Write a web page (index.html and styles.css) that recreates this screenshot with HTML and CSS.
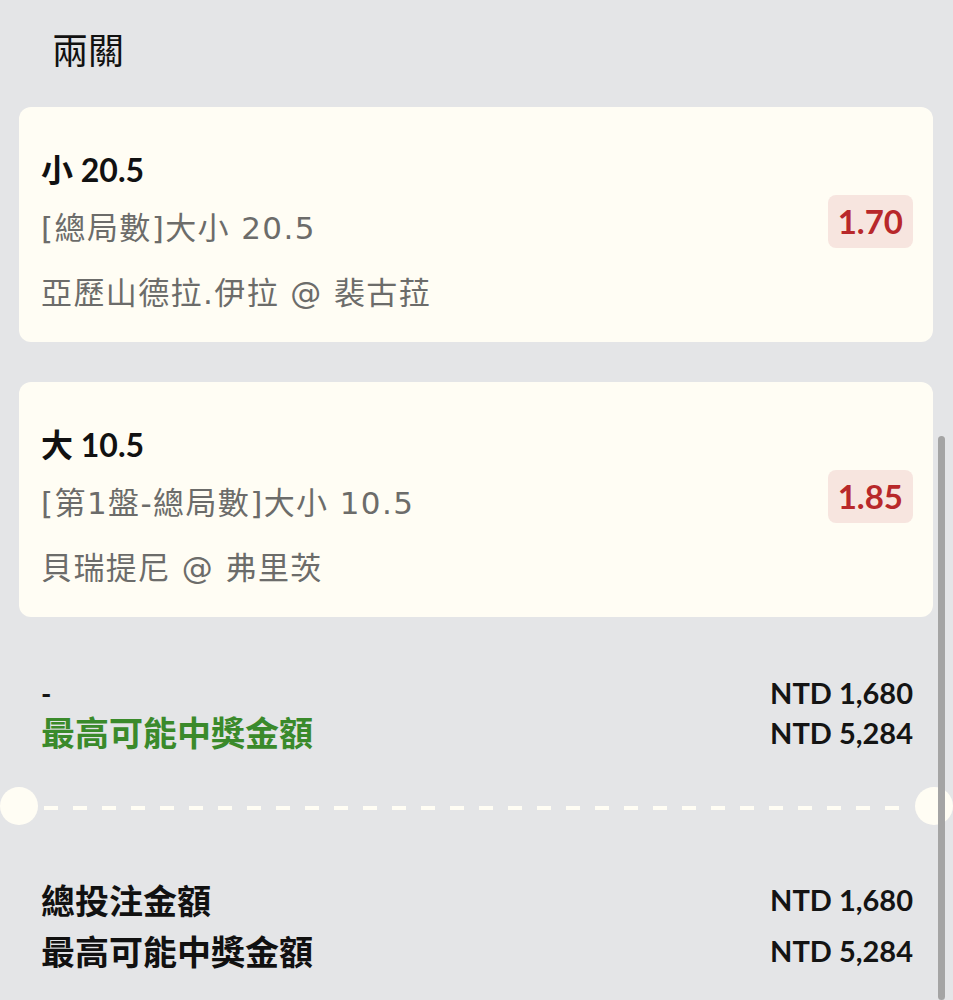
FILE: index.html
```html
<!DOCTYPE html>
<html lang="zh-Hant">
<head>
<meta charset="utf-8">
<title>兩關</title>
<link rel="stylesheet" href="styles.css">
</head>
<body>
<div class="page">
  <h1 class="title">兩關</h1>

  <div class="card">
    <div class="card-info">
      <div class="pick">小 20.5</div>
      <div class="market">[總局數]大小 20.5</div>
      <div class="match">亞歷山德拉.伊拉 @ 裴古菈</div>
    </div>
    <div class="odds">1.70</div>
  </div>

  <div class="card">
    <div class="card-info">
      <div class="pick">大 10.5</div>
      <div class="market">[第1盤-總局數]大小 10.5</div>
      <div class="match">貝瑞提尼 @ 弗里茨</div>
    </div>
    <div class="odds">1.85</div>
  </div>

  <div class="summary">
    <div class="summary-left">
      <div class="dash-label">-</div>
      <div class="green-label">最高可能中獎金額</div>
    </div>
    <div class="summary-right">
      <div class="amount">NTD 1,680</div>
      <div class="amount">NTD 5,284</div>
    </div>
  </div>
</div>

<div class="divider">
  <span class="notch"></span>
  <span class="dashes"></span>
  <span class="notch"></span>
</div>

<div class="totals">
  <div class="total-row">
    <span class="total-label">總投注金額</span>
    <span class="amount">NTD 1,680</span>
  </div>
  <div class="total-row">
    <span class="total-label">最高可能中獎金額</span>
    <span class="amount">NTD 5,284</span>
  </div>
</div>

<div class="scrollbar"></div>
</body>
</html>
```

FILE: styles.css
```css
* { box-sizing: border-box; }

html, body {
  margin: 0;
  padding: 0;
  background: #e4e5e7;
  font-family: "Lato", "Noto Sans CJK TC", sans-serif;
  color: #141414;
  overflow: hidden;
}

.page {
  padding: 0 20px 0 19px;
}

.title {
  margin: 0;
  padding: 25px 0 0 33px;
  height: 107px;
  font-size: 36px;
  line-height: 50px;
  font-weight: 400;
  color: #111;
}

.card {
  background: #fffdf4;
  border-radius: 12px;
  height: 235px;
  padding: 41px 20px 27px 22px;
  display: flex;
  align-items: center;
  margin-bottom: 40px;
}

.card-info {
  flex: 1;
  align-self: flex-start;
}

.pick {
  font-size: 32px;
  line-height: 44px;
  font-weight: 700;
  color: #111;
}

.market,
.match {
  font-family: "DejaVu Sans", "Noto Sans CJK TC", sans-serif;
  font-size: 31px;
  line-height: 44px;
  letter-spacing: 1.4px;
  color: #6c6c6a;
}

.market {
  margin-top: 14px;
}

.match {
  margin-top: 21px;
}

.odds {
  background: #f7e5df;
  color: #b8282a;
  border-radius: 8px;
  font-size: 33px;
  font-weight: 700;
  line-height: 53px;
  padding: 0 10px;
  margin-bottom: 20px;
}

.summary {
  display: flex;
  justify-content: space-between;
  padding: 16px 20px 0 22px;
}

.summary-left, .summary-right {
  line-height: 40px;
}

.dash-label {
  font-size: 28px;
  font-weight: 700;
}

.green-label {
  font-size: 34px;
  font-weight: 700;
  color: #3a8a2b;
}

.summary-right {
  text-align: right;
}

.amount {
  font-size: 29px;
  font-weight: 700;
  color: #141414;
}

.divider {
  display: flex;
  align-items: center;
  margin-top: 34px;
  height: 38px;
}

.notch {
  width: 38px;
  height: 38px;
  border-radius: 50%;
  background: #fffdf4;
  flex: none;
}

.dashes {
  flex: 1;
  height: 4px;
  margin: 4px 5px 0 6px;
  background: repeating-linear-gradient(to right, #fffdf4 0 14px, transparent 14px 29px);
}

.totals {
  padding: 49px 40px 0 41px;
}

.total-row {
  display: flex;
  justify-content: space-between;
  align-items: center;
  height: 51px;
}

.total-label {
  font-size: 34px;
  font-weight: 700;
  color: #111;
}

.scrollbar {
  position: fixed;
  top: 436px;
  bottom: 0;
  right: 8px;
  width: 7px;
  border-radius: 4px;
  background: #a4a4a4;
}
```
